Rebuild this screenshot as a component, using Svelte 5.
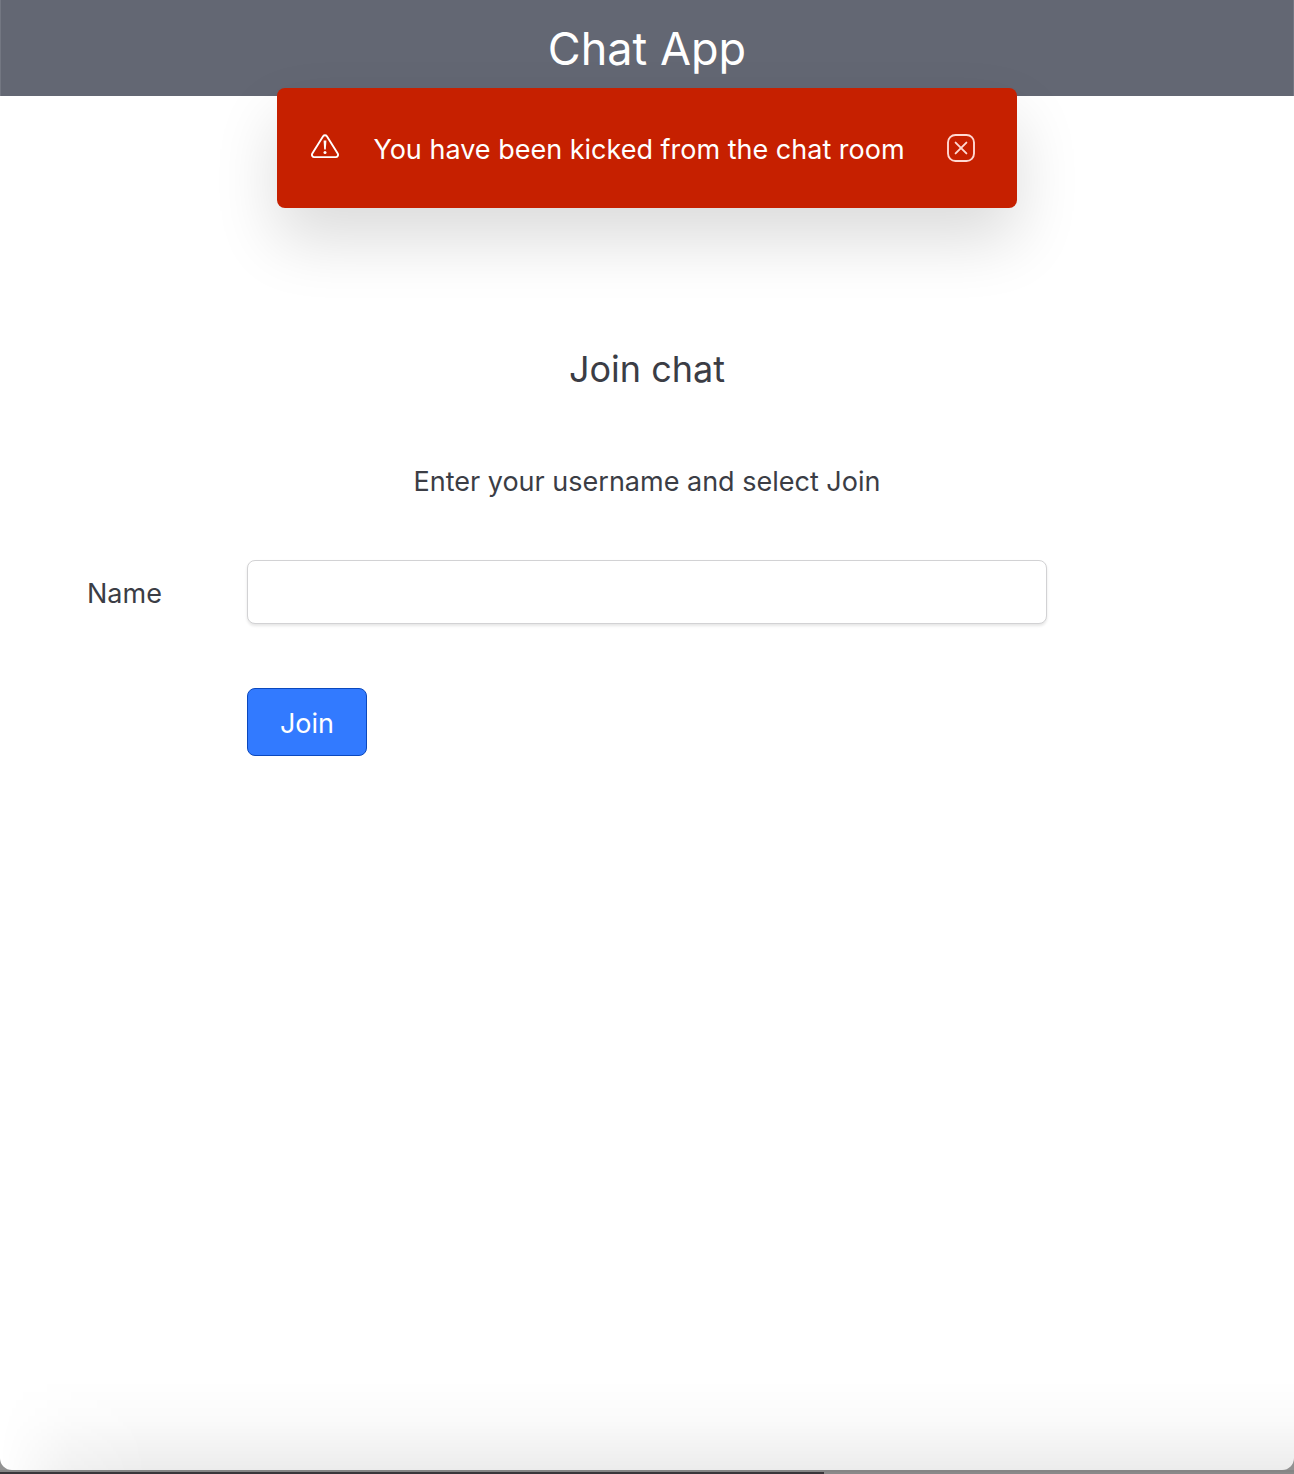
<script>
  let name = $state('');
  let alertVisible = $state(true);
</script>

<div class="desktop">
  <div class="window">
    <header>
      <h1>Chat App</h1>
    </header>

    {#if alertVisible}
      <div class="alert" role="alert">
        <svg class="icon" viewBox="0 0 28 28" aria-hidden="true">
          <path
            d="M12.1 2.2a2.3 2.3 0 0 1 3.8 0l10.8 17.4a2.3 2.3 0 0 1-2 3.5H3.3a2.3 2.3 0 0 1-2-3.5Z"
            fill="none"
            stroke="currentColor"
            stroke-width="1.9"
          />
          <path d="M12.6 6.6h2.8l-.6 8.8h-1.6Z" fill="currentColor" />
          <circle cx="14" cy="18.6" r="1.5" fill="currentColor" />
        </svg>
        <p>You have been kicked from the chat room</p>
        <button class="close" type="button" aria-label="Dismiss" onclick={() => (alertVisible = false)}>
          <svg class="icon" viewBox="0 0 28 28" aria-hidden="true">
            <rect x="1" y="1" width="26" height="26" rx="7.5" fill="none" stroke="currentColor" stroke-width="1.9" />
            <path d="M8.6 8.6l10.8 10.8M19.4 8.6l-10.8 10.8" stroke="currentColor" stroke-width="1.9" stroke-linecap="round" />
          </svg>
        </button>
      </div>
    {/if}

    <main>
      <h2>Join chat</h2>
      <p class="hint">Enter your username and select Join</p>
      <form onsubmit={(event) => event.preventDefault()}>
        <label for="name">Name</label>
        <input id="name" type="text" autocomplete="off" bind:value={name} />
        <button class="join" type="submit">Join</button>
      </form>
    </main>
    <div class="shade"></div>
  </div>
  <div class="edge"></div>
</div>

<style>
  :global(body) {
    background: #929292;
  }

  .desktop {
    display: flex;
    flex-direction: column;
    min-height: 100vh;
    color: #3b3d45;
    font: 27px/40px Inter, "Liberation Sans", sans-serif;
  }

  .window {
    position: relative;
    flex: 1;
    display: flex;
    flex-direction: column;
    overflow: hidden;
    background: #fff;
    border-radius: 0 0 12px 12px;
  }

  header {
    box-sizing: border-box;
    height: 96px;
    padding-top: 16px;
    background: #636773;
    border-left: 1px solid #737782;
    border-right: 1px solid #737782;
    color: #fff;
    text-align: center;
  }

  h1,
  h2,
  p {
    margin: 0;
    font-weight: 400;
  }

  h1 {
    font-size: 45px;
    line-height: 66px;
  }

  .alert {
    position: absolute;
    top: 88px;
    right: 0;
    left: 0;
    box-sizing: border-box;
    display: flex;
    align-items: center;
    gap: 34px;
    width: fit-content;
    height: 120px;
    margin: 0 auto;
    padding: 0 34px;
    border-radius: 8px;
    background: #c62000;
    box-shadow: 0 32px 64px rgba(0, 0, 0, 0.14);
    color: #fff;
    white-space: nowrap;
  }

  .alert p {
    padding-top: 4px;
  }

  .icon {
    display: block;
    width: 28px;
    height: 28px;
  }

  .close {
    padding: 8px;
    border: 0;
    background: none;
    color: #ffd9d2;
    cursor: pointer;
  }

  main {
    flex: 1;
    padding: 249px 87px 0;
    text-align: center;
  }

  h2 {
    font-size: 36px;
    line-height: 48px;
  }

  .hint {
    margin-top: 69px;
  }

  form {
    display: grid;
    grid-template-columns: 160px 1fr 160px;
    row-gap: 64px;
    align-items: center;
    margin-top: 58px;
    text-align: left;
  }

  label {
    padding-top: 4px;
  }

  input {
    grid-column: 2;
    box-sizing: border-box;
    width: 100%;
    height: 64px;
    padding: 0 24px;
    border: 1px solid #d2d2d4;
    border-radius: 8px;
    background: #fff;
    box-shadow: 0 2px 3px rgba(0, 0, 0, 0.1);
    color: inherit;
    font: inherit;
  }

  .join {
    grid-column: 2;
    justify-self: start;
    box-sizing: border-box;
    width: 120px;
    height: 68px;
    padding: 4px 0 0;
    border: 1px solid #0b48bd;
    border-radius: 8px;
    background: #327aff;
    color: #fff;
    font: inherit;
    cursor: pointer;
  }

  .shade {
    height: 90px;
    background: linear-gradient(rgba(0, 0, 0, 0), rgba(0, 0, 0, 0.02) 45%, rgba(0, 0, 0, 0.075));
    mask-image: linear-gradient(to right, transparent, rgba(0, 0, 0, 0.75) 70px, #000 150px);
  }

  .edge {
    height: 2px;
    border-top: 2px solid #858585;
    background: linear-gradient(to right, #38363a 824px, #898989 824px);
  }
</style>
